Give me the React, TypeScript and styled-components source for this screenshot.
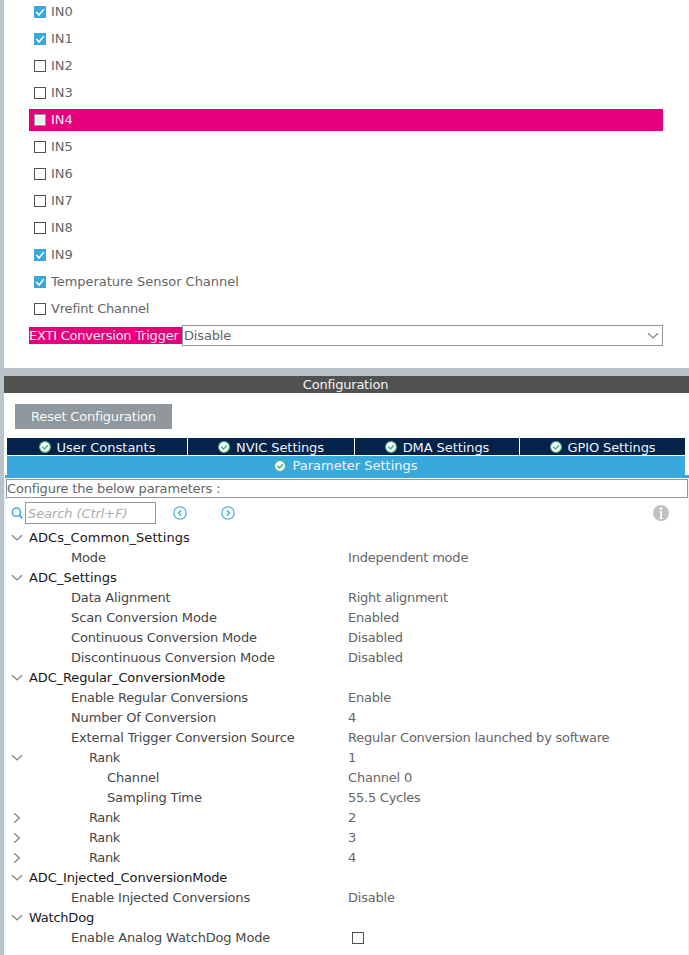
import React from "react";
import styled, { createGlobalStyle } from "styled-components";

const Global = createGlobalStyle`
  * { box-sizing: border-box; }
  body { margin: 0; background: #fff; }
`;

const Window = styled.div`
  width: 689px;
  height: 955px;
  overflow: hidden;
  display: flex;
  flex-direction: column;
  gap: 8px;
  padding-left: 4px;
  background: #b8c4ca;
  color: #646565;
  font: 13px/20px "DejaVu Sans", sans-serif;
  white-space: pre;
`;

const ModePanel = styled.section`
  height: 368px;
  flex: none;
  padding: 1px 26px 0 25px;
  background: #fff;
  display: flex;
  flex-direction: column;
  gap: 5px;
`;

const ChannelRow = styled.label<{ $conflict?: boolean; $track?: number }>`
  height: 22px;
  flex: none;
  display: flex;
  align-items: center;
  gap: 5px;
  padding-left: 5px;
  background: ${(p) => (p.$conflict ? "#e6007e" : "transparent")};
  color: ${(p) => (p.$conflict ? "#f8e6f0" : "inherit")};
  letter-spacing: ${(p) => p.$track ?? 0}px;
`;

const Box = styled.span<{ $checked?: boolean; $disabled?: boolean }>`
  width: 12px;
  height: 12px;
  flex: none;
  display: flex;
  border: ${(p) => (p.$checked ? "0" : `1px solid ${p.$disabled ? "#90989e" : "#4f5251"}`)};
  background: ${(p) => (p.$checked ? "#39a9dc" : p.$disabled ? "#eff0f1" : "#fff")};
`;

const TriggerRow = styled.div`
  display: flex;
  align-items: center;
  height: 21px;
`;

const TriggerLabel = styled.span`
  width: 153px;
  height: 17px;
  line-height: 17px;
  background: #e6007e;
  color: #f8e6f0;
  letter-spacing: -0.22px;
`;

const Select = styled.div`
  flex: 1;
  height: 21px;
  display: flex;
  align-items: center;
  justify-content: space-between;
  padding: 0 3px 0 1px;
  border: 1px solid #90989e;
  letter-spacing: -0.15px;
`;

const ConfigPanel = styled.section`
  flex: 1;
  background: #fff;
  display: flex;
  flex-direction: column;
`;

const Title = styled.header`
  height: 17px;
  line-height: 17px;
  flex: none;
  background: #4f5251;
  color: #f4f4f4;
  text-align: center;
  padding-right: 2px;
  letter-spacing: -0.22px;
`;

const ResetButton = styled.button`
  width: 157px;
  height: 25px;
  flex: none;
  margin: 11px 0 9px 11px;
  padding: 0;
  border: 0;
  background: #90989e;
  color: #f6f7f7;
  font: inherit;
  letter-spacing: -0.2px;
`;

const Tabs = styled.nav`
  display: grid;
  grid-template-columns: 180px 166px 164px 165px;
  grid-template-rows: 17px 19px;
  gap: 1px;
  padding: 0 4px 0 3px;
`;

const Tab = styled.div<{ $active?: boolean; $track?: number }>`
  display: flex;
  align-items: center;
  justify-content: center;
  gap: 6px;
  grid-column: ${(p) => (p.$active ? "1 / -1" : "auto")};
  background: ${(p) => (p.$active ? "#39a9dc" : "#03234b")};
  color: #f0f4f7;
  line-height: 19px;
  letter-spacing: ${(p) => p.$track ?? 0}px;
`;

const TabText = styled.span<{ $active?: boolean }>`
  padding-top: ${(p) => (p.$active ? 0 : 2)}px;
`;

const TabRule = styled.div`
  height: 3px;
  flex: none;
  margin-left: 1px;
  background: #39a9dc;
`;

const Body = styled.div`
  flex: 1;
  border-left: 2px solid #eff1f2;
  border-right: 1px solid #eff1f2;
  padding-top: 1px;
`;

const Hint = styled.div`
  height: 19px;
  line-height: 18px;
  border: 1px solid #90989e;
  letter-spacing: -0.18px;
`;

const Toolbar = styled.div`
  display: flex;
  align-items: center;
  height: 30px;
  padding: 0 19px 0 5px;
`;

const Search = styled.div`
  width: 131px;
  height: 22px;
  margin: 0 17px 0 2px;
  padding-left: 2px;
  border: 1px solid #90989e;
  color: #adadad;
  font-style: italic;
  line-height: 21px;
  letter-spacing: -0.08px;
`;

const Spacer = styled.span<{ $w?: number }>`
  flex: ${(p) => (p.$w ? `0 0 ${p.$w}px` : "1")};
`;

const TreeRow = styled.div`
  display: grid;
  grid-template-columns: 23px 319px 1fr;
  align-items: center;
  height: 20px;
`;

const Toggle = styled.span`
  display: flex;
  padding-left: 5px;
`;

const Name = styled.span<{ $depth: number; $track?: number }>`
  padding-left: ${(p) => [0, 42, 60, 78][p.$depth]}px;
  color: ${(p) => (p.$depth ? "#464646" : "#181818")};
  letter-spacing: ${(p) => p.$track ?? -0.16}px;
`;

const Value = styled.span<{ $box?: boolean; $track?: number }>`
  display: flex;
  padding-left: ${(p) => (p.$box ? 4 : 0)}px;
  padding-bottom: ${(p) => (p.$box ? 1 : 0)}px;
  letter-spacing: ${(p) => p.$track ?? -0.2}px;
`;

const Check = () => (
  <svg width="12" height="12" viewBox="0 0 12 12">
    <path d="M2.3 6 5 9 9.8 3.2" fill="none" stroke="#fff" strokeWidth="1.5" />
  </svg>
);

const Chevron = ({ right }: { right?: boolean }) => (
  <svg width="12" height="12" viewBox="0 0 12 12">
    <path d={right ? "M3.2 1.3 8.4 6 3.2 10.7" : "M1 3.2 6 8 11 3.2"} fill="none" stroke="#808080" strokeWidth="1.2" />
  </svg>
);

const Valid = () => (
  <svg width="12" height="12" viewBox="0 0 12 12">
    <circle cx="6" cy="6" r="5.4" fill="#fff" stroke="#55b583" strokeWidth="1.1" />
    <path d="M3.2 5.7 5.5 8 8.9 4.2" fill="none" stroke="#3fae74" strokeWidth="1.3" />
  </svg>
);

const Arrow = ({ right }: { right?: boolean }) => (
  <svg width="14" height="14" viewBox="0 0 14 14" fill="none" stroke="#39a9dc">
    <circle cx="7" cy="7" r="6.2" strokeWidth="1.1" />
    <path d={right ? "M5.7 4.2 8.5 7 5.7 9.8" : "M8.3 4.2 5.5 7 8.3 9.8"} strokeWidth="1.3" />
  </svg>
);

const Magnifier = () => (
  <svg width="12" height="12" viewBox="0 0 12 12" fill="none" stroke="#39a9dc">
    <circle cx="5.4" cy="5.2" r="4.1" strokeWidth="1.5" />
    <path d="M8.2 8 11.3 11.3" strokeWidth="1.7" />
  </svg>
);

const Info = () => (
  <svg width="16" height="16" viewBox="0 0 16 16">
    <circle cx="8" cy="8" r="8" fill="#c0c0c0" />
    <path d="M6.3 6.3H9V13H10V14H6.3V13H7.3V7.2H6.3Z" fill="#fff" />
    <circle cx="8" cy="3.8" r="1.3" fill="#fff" />
  </svg>
);

const channels: { name: string; on?: boolean; track?: number }[] = [
  { name: "IN0", on: true },
  { name: "IN1", on: true },
  { name: "IN2" },
  { name: "IN3" },
  { name: "IN4" },
  { name: "IN5" },
  { name: "IN6" },
  { name: "IN7" },
  { name: "IN8" },
  { name: "IN9", on: true },
  { name: "Temperature Sensor Channel", on: true, track: -0.03 },
  { name: "Vrefint Channel", track: -0.18 },
];

const tabs = [
  { name: "User Constants", track: 0 },
  { name: "NVIC Settings", track: -0.08 },
  { name: "DMA Settings", track: -0.08 },
  { name: "GPIO Settings", track: -0.12 },
];

type Row = {
  name: string;
  depth: number;
  track?: number;
  value?: string;
  valueTrack?: number;
  open?: boolean;
  box?: boolean;
};
const rows: Row[] = [
  { name: "ADCs_Common_Settings", depth: 0, track: 0.06, open: true },
  { name: "Mode", depth: 1, value: "Independent mode" },
  { name: "ADC_Settings", depth: 0, track: 0, open: true },
  { name: "Data Alignment", depth: 1, value: "Right alignment", valueTrack: -0.28 },
  { name: "Scan Conversion Mode", depth: 1, track: -0.12, value: "Enabled" },
  { name: "Continuous Conversion Mode", depth: 1, value: "Disabled" },
  { name: "Discontinuous Conversion Mode", depth: 1, value: "Disabled" },
  { name: "ADC_Regular_ConversionMode", depth: 0, track: -0.12, open: true },
  { name: "Enable Regular Conversions", depth: 1, track: -0.2, value: "Enable" },
  { name: "Number Of Conversion", depth: 1, value: "4" },
  { name: "External Trigger Conversion Source", depth: 1, track: -0.15, value: "Regular Conversion launched by software", valueTrack: -0.24 },
  { name: "Rank", depth: 2, track: -0.4, value: "1", open: true },
  { name: "Channel", depth: 3, value: "Channel 0" },
  { name: "Sampling Time", depth: 3, value: "55.5 Cycles", valueTrack: -0.25 },
  { name: "Rank", depth: 2, track: -0.4, value: "2", open: false },
  { name: "Rank", depth: 2, track: -0.4, value: "3", open: false },
  { name: "Rank", depth: 2, track: -0.4, value: "4", open: false },
  { name: "ADC_Injected_ConversionMode", depth: 0, track: -0.12, open: true },
  { name: "Enable Injected Conversions", depth: 1, track: -0.2, value: "Disable" },
  { name: "WatchDog", depth: 0, track: -0.22, open: true },
  { name: "Enable Analog WatchDog Mode", depth: 1, track: -0.17, box: true },
];

export default function App() {
  return (
    <>
      <Global />
      <Window>
        <ModePanel>
          {channels.map((c) => (
            <ChannelRow key={c.name} $conflict={c.name === "IN4"} $track={c.track}>
              <Box $checked={c.on} $disabled={c.name === "IN4"}>
                {c.on && <Check />}
              </Box>
              {c.name}
            </ChannelRow>
          ))}
          <TriggerRow>
            <TriggerLabel>EXTI Conversion Trigger</TriggerLabel>
            <Select>
              Disable
              <Chevron />
            </Select>
          </TriggerRow>
        </ModePanel>
        <ConfigPanel>
          <Title>Configuration</Title>
          <ResetButton>Reset Configuration</ResetButton>
          <Tabs>
            {tabs.map((t) => (
              <Tab key={t.name} $track={t.track}>
                <Valid />
                <TabText>{t.name}</TabText>
              </Tab>
            ))}
            <Tab $active>
              <Valid />
              <TabText $active>Parameter Settings</TabText>
            </Tab>
          </Tabs>
          <TabRule />
          <Body>
            <Hint>Configure the below parameters :</Hint>
            <Toolbar>
              <Magnifier />
              <Search>Search (Ctrl+F)</Search>
              <Arrow />
              <Spacer $w={34} />
              <Arrow right />
              <Spacer />
              <Info />
            </Toolbar>
            {rows.map((r, i) => (
              <TreeRow key={i}>
                <Toggle>{r.open !== undefined && <Chevron right={!r.open} />}</Toggle>
                <Name $depth={r.depth} $track={r.track}>{r.name}</Name>
                <Value $box={r.box} $track={r.valueTrack}>{r.box ? <Box /> : r.value}</Value>
              </TreeRow>
            ))}
          </Body>
        </ConfigPanel>
      </Window>
    </>
  );
}
